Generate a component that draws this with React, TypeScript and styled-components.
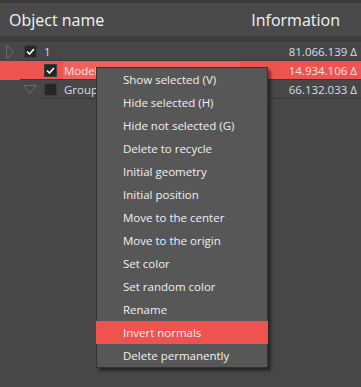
import React from 'react';
import styled, { createGlobalStyle } from 'styled-components';

const GlobalStyle = createGlobalStyle`
    body {
        margin: 0;
        background: #474747;
        font-family: "Open Sans", "Noto Sans", sans-serif;
    }
`;

const Page = styled.div`
    position: relative;
    width: 361px;
    height: 387px;
    overflow: hidden;
    background: #474747;
    border-top: 3px solid #3c3c3c;
    box-sizing: border-box;
`;

const Header = styled.div`
    height: 33px;
    display: flex;
    align-items: center;
    justify-content: space-between;
    padding: 0 21px 0 9px;
    background: #4a4a4a;
    border-bottom: 6px solid #3d3d3d;
    color: #f2f4f7;
    font-size: 16px;
`;

const Row = styled.div<{ $selected?: boolean; $rule: number }>`
    position: relative;
    height: 19px;
    display: flex;
    align-items: center;
    padding-right: 4px;
    background: ${(p) => (p.$selected ? '#ef5350' : 'transparent')};
    font-size: 11.5px;
    color: ${(p) => (p.$selected ? '#fbe3e3' : '#d9dee6')};
    &:after {
        content: '';
        position: absolute;
        left: ${(p) => p.$rule}px;
        right: 0;
        bottom: 0;
        height: 1px;
        background: #3a3a3a;
    }
`;

const Arrow = styled.span<{ $indent: number }>`
    width: 20px;
    margin-left: ${(p) => p.$indent}px;
    display: flex;
    align-items: center;
    justify-content: center;
    flex-shrink: 0;
`;

const Gap = styled.span`
    width: 4px;
    flex-shrink: 0;
`;

const Check = styled.span`
    width: 13px;
    height: 13px;
    box-sizing: border-box;
    background: #262626;
    border: 1px solid #3c3c3c;
    display: flex;
    align-items: center;
    justify-content: center;
    flex-shrink: 0;
`;

const Label = styled.span<{ $selected?: boolean }>`
    margin-left: 6px;
    padding-left: 1px;
    height: 18px;
    line-height: 18px;
    width: ${(p) => (p.$selected ? '176px' : 'auto')};
    background: ${(p) => (p.$selected ? '#f0605c' : 'transparent')};
`;

const Value = styled.span`
    margin-left: auto;
`;

const Menu = styled.div`
    position: absolute;
    left: 96px;
    top: 64px;
    width: 172px;
    box-sizing: border-box;
    background: #575757;
    border: 1px solid #333333;
    box-shadow: 3px 3px 3px rgba(0, 0, 0, 0.45);
`;

const Item = styled.div<{ $active?: boolean }>`
    height: 23px;
    line-height: 23px;
    padding-left: 27px;
    margin: 0 -1px;
    font-size: 11.5px;
    color: #f1f1f1;
    background: ${(p) => (p.$active ? '#ef5350' : 'transparent')};
`;

const RightArrow = () => (
    <svg width="10" height="16" viewBox="0 0 10 16">
        <path d="M1.5 1 L8.5 8 L1.5 15 Z" fill="none" stroke="#6b6b6b" strokeWidth="1" />
    </svg>
);

const DownArrow = () => (
    <svg width="14" height="9" viewBox="0 0 14 9">
        <path d="M0.5 0.5 L13.5 0.5 L7 8 Z" fill="none" stroke="#6b6b6b" strokeWidth="1" />
    </svg>
);

const Tick = () => (
    <svg width="9" height="7" viewBox="0 0 9 7">
        <path d="M1 3.5 L3.5 6 L8 1" fill="none" stroke="#ffffff" strokeWidth="1.6" />
    </svg>
);

const items = [
    'Show selected (V)',
    'Hide selected (H)',
    'Hide not selected (G)',
    'Delete to recycle',
    'Initial geometry',
    'Initial position',
    'Move to the center',
    'Move to the origin',
    'Set color',
    'Set random color',
    'Rename',
    'Invert normals',
    'Delete permanently',
];

export default function App() {
    return (
        <Page>
            <GlobalStyle />
            <Header>
                <span>Object name</span>
                <span>Information</span>
            </Header>
            <Row $rule={20}>
                <Arrow $indent={0}><RightArrow /></Arrow>
                <Gap />
                <Check><Tick /></Check>
                <Label>1</Label>
                <Value>81.066.139 Δ</Value>
            </Row>
            <Row $selected $rule={20}>
                <Arrow $indent={24} />
                <Check><Tick /></Check>
                <Label $selected>Model 01</Label>
                <Value>14.934.106 Δ</Value>
            </Row>
            <Row $rule={40}>
                <Arrow $indent={20}><DownArrow /></Arrow>
                <Gap />
                <Check />
                <Label>Group</Label>
                <Value>66.132.033 Δ</Value>
            </Row>
            <Menu>
                {items.map((t) => (
                    <Item key={t} $active={t === 'Invert normals'}>{t}</Item>
                ))}
            </Menu>
        </Page>
    );
}
